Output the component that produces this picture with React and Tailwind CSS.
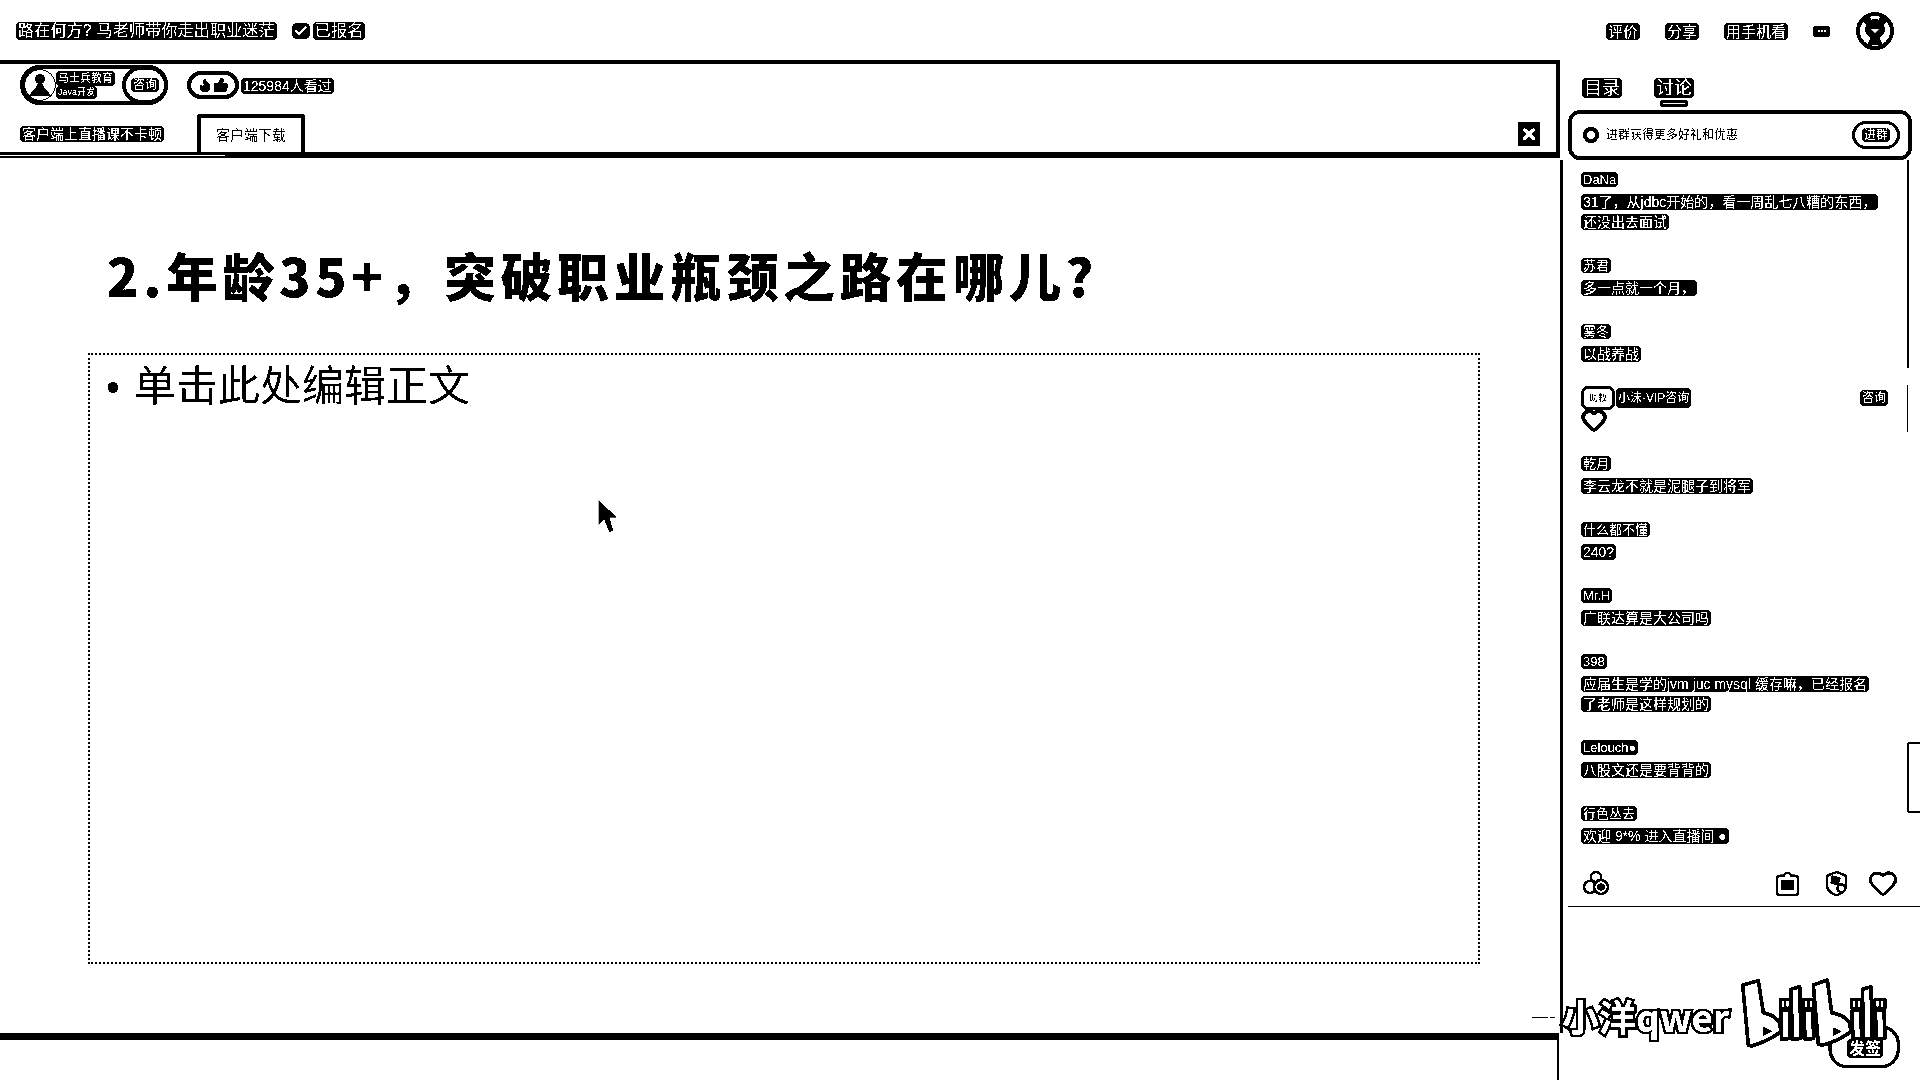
import React from "react";
import { Check, Heart, Flame, ThumbsUp, X } from "lucide-react";

const Hl = ({ children, className = "" }) => (
  <span className={"bg-black text-white rounded-[4px] px-[2px] py-[1px] box-decoration-clone " + className}>{children}</span>
);

const messages = [
  { name: "DaNa", lines: ["31了，从jdbc开始的，看一周乱七八糟的东西，", "还没出去面试"] },
  { name: "苏君", lines: ["多一点就一个月，"] },
  { name: "雾冬", lines: ["以战养战"] },
  { vip: true },
  { name: "乾月", lines: ["李云龙不就是泥腿子到将军"] },
  { name: "什么都不懂", lines: ["240?"] },
  { name: "Mr.H", lines: ["广联达算是大公司吗"] },
  { name: "398", lines: ["应届生是学的jvm juc mysql 缓存嘛，已经报名", "了老师是这样规划的"] },
  { name: "Lelouch●", lines: ["八股文还是要背背的"] },
  { name: "行色丛去", lines: ["欢迎 9*% 进入直播间 ●"], tight: true },
];

function Message({ m }) {
  if (m.vip) {
    return (
      <div className="mb-[23px] pr-[22px]">
        <div className="h-[20px] flex items-center text-[12px] pt-[2px]">
          <span className="bg-white border-[3px] border-black rounded-[7px] w-[34px] h-[24px] flex items-center justify-center text-[9px] text-black leading-none">助教</span>
          <Hl className="ml-[1px]">小沫-VIP咨询</Hl>
          <span className="ml-auto"><Hl>咨询</Hl></span>
        </div>
        <div className="h-[20px] mt-[3px] flex items-center">
          <Heart className="w-[26px] h-[26px] text-black fill-white" strokeWidth={3.5} />
        </div>
      </div>
    );
  }
  return (
    <div className={m.tight ? "" : "mb-[23px]"}>
      <div className="h-[20px] flex items-center text-[13px] leading-none"><Hl>{m.name}</Hl></div>
      <div className="mt-[3px]">
        {m.lines.map((l) => (
          <div key={l} className="h-[20px] flex items-center text-[14px] leading-none whitespace-nowrap"><Hl>{l}</Hl></div>
        ))}
      </div>
    </div>
  );
}

function IGlyph({ x, tall, w = 26 }) {
  if (tall) {
    return <path d={`M${x} 58 L${x + w} 50 L${x + w + 4} 205 L${x + 4} 208 Z`} fill="white" stroke="black" strokeWidth="11" strokeLinejoin="round" />;
  }
  return (
    <g>
      <rect x={x - 6} y="84" width={w + 14} height="34" rx="4" fill="black" />
      <rect x={x + 3} y="92" width="7" height="18" fill="white" />
      <rect x={x + 17} y="92" width="7" height="18" fill="white" />
      <path d={`M${x} 122 L${x + w} 120 L${x + w + 3} 205 L${x + 3} 208 Z`} fill="white" stroke="black" strokeWidth="11" strokeLinejoin="round" />
    </g>
  );
}

function Logo() {
  return (
    <svg viewBox="0 0 540 315" className="absolute left-[1730px] top-[970px] w-[180px] h-[105px]">
      <rect x="300" y="170" width="205" height="120" rx="52" fill="white" stroke="black" strokeWidth="10" />
      <IGlyph x={152} />
      <IGlyph x={183} tall />
      <IGlyph x={222} />
      <IGlyph x={366} />
      <IGlyph x={397} tall />
      <IGlyph x={436} />
      <path d="M38 45 L85 32 L100 128 Q135 135 150 160 L152 186 Q110 215 65 228 L55 225 Z" fill="white" stroke="black" strokeWidth="11" strokeLinejoin="round" />
      <path d="M250 45 L292 30 L305 128 Q345 135 360 160 L362 186 Q320 215 275 226 L265 222 Z" fill="white" stroke="black" strokeWidth="11" strokeLinejoin="round" />
      <path d="M100 170 L128 184 L100 198 Z" fill="black" />
      <path d="M310 172 L336 185 L310 198 Z" fill="black" />
    </svg>
  );
}

export default function App() {
  return (
    <div className="relative w-[1920px] h-[1080px] overflow-hidden bg-white text-black contrast-[100] font-['Liberation_Sans','Noto_Sans_CJK_SC',sans-serif]">
      {/* top bar */}
      <div className="h-[60px] flex items-center justify-between pl-[16px] pr-[25px] pt-[2px]">
        <div className="flex items-center text-[16px] leading-none tracking-[0.2px]">
          <Hl>路在何方? 马老师带你走出职业迷茫</Hl>
          <span className="ml-[15px] bg-black rounded-[5px] w-[18px] h-[16px] flex items-center justify-center">
            <Check className="w-[14px] h-[14px] text-white" strokeWidth={4} />
          </span>
          <Hl className="ml-[3px]">已报名</Hl>
        </div>
        <div className="flex items-center text-[15px] leading-none">
          <Hl>评价</Hl>
          <Hl className="ml-[25px]">分享</Hl>
          <Hl className="ml-[25px]">用手机看</Hl>
          <span className="ml-[25px] w-[17px] h-[11px] bg-black rounded-[3px] flex items-center justify-center gap-[1px]">
            <i className="w-[2px] h-[2px] bg-white" /><i className="w-[2px] h-[2px] bg-white" /><i className="w-[2px] h-[2px] bg-white" />
          </span>
          <svg viewBox="0 0 40 40" className="ml-[25px] w-[40px] h-[40px]">
            <circle cx="20" cy="20" r="17" fill="white" stroke="black" strokeWidth="4" />
            <circle cx="20" cy="18" r="10" fill="black" />
            <circle cx="12" cy="9" r="4" fill="black" />
            <circle cx="28" cy="9" r="4" fill="black" />
            <path d="M12 34 L16 26 L24 26 L28 34 Z" fill="black" />
            <path d="M16 18 h8 l-4 4 Z" fill="white" />
          </svg>
        </div>
      </div>

      <div className="flex h-[1020px]">
        {/* main column */}
        <div className="w-[1560px] flex flex-col">
          <div className="h-[98px] border-t-[4px] border-b-[6px] border-r-[4px] border-black flex flex-col relative">
            <div className="h-[40px] flex items-start pl-[20px] pt-[1px]">
              <div className="flex items-center h-[40px] w-[148px] bg-white border-[4px] border-black rounded-full">
                <svg viewBox="0 0 32 32" className="w-[32px] h-[32px] shrink-0">
                  <circle cx="16" cy="16" r="15.5" fill="white" stroke="black" strokeWidth="1" />
                  <circle cx="16" cy="10" r="5" fill="black" />
                  <path d="M5 27 C8 21 12 21 13 15 H19 C20 21 24 21 27 27 Z" fill="black" />
                </svg>
                <div className="flex flex-col items-start text-[11px] leading-[15px] w-[64px] shrink-0 whitespace-nowrap">
                  <Hl className="rounded-[2px] leading-[13px]">马士兵教育</Hl>
                  <Hl className="text-[9px] rounded-[2px] leading-[11px]">Java开发</Hl>
                </div>
                <span className="ml-auto w-[46px] h-[38px] -mr-[4px] rounded-full bg-white border-[4px] border-black flex items-center justify-center text-[12px] leading-none">
                  <Hl>咨询</Hl>
                </span>
              </div>
              <div className="ml-[19px] mt-[6px] w-[52px] h-[28px] bg-black rounded-full flex items-center justify-center gap-[1px]">
                <span className="w-[44px] h-[20px] bg-white rounded-full flex items-center justify-center">
                  <Flame className="w-[16px] h-[16px] text-black fill-black" />
                  <ThumbsUp className="w-[16px] h-[16px] text-black fill-black" />
                </span>
              </div>
              <Hl className="ml-[2px] mt-[13px] text-[14px] leading-none">125984人看过</Hl>
            </div>
            <div className="flex-1 flex items-end pl-[20px] pr-[16px]">
              <div className="h-[40px] flex items-center text-[14px] leading-none pt-[4px]">
                <Hl>客户端上直播课不卡顿</Hl>
              </div>
              <div className="ml-[33px] w-[108px] h-[38px] border-[4px] border-b-0 border-black rounded-t-[3px] flex items-center justify-center text-[14px] leading-none">
                客户端下载
              </div>
              <span className="ml-auto mb-[6px] w-[22px] h-[24px] bg-black flex items-center justify-center">
                <X className="w-[18px] h-[18px] text-white" strokeWidth={4} />
              </span>
            </div>
            <div className="absolute left-0 top-[91px] w-[225px] h-px bg-white" />
          </div>

          <div className="h-[875px] pt-[74px] px-[88px]">
            <div className="h-[85px] flex items-center pl-[19px] text-[52px] font-black tracking-[4.5px] leading-none whitespace-nowrap font-['Noto_Sans_CJK_SC',sans-serif]">
              2.年龄35+，突破职业瓶颈之路在哪儿?
            </div>
            <div className="mt-[36px] w-[1392px] h-[611px] border-[2px] border-dotted border-black pl-[16px] pt-[3px] flex items-start">
              <span className="text-[42px] leading-[50px] whitespace-nowrap font-['Noto_Sans_CJK_SC',sans-serif]">
                <span className="text-[40px] leading-none mr-[14px] font-['Liberation_Sans']">•</span>单击此处编辑正文
              </span>
            </div>
          </div>

          <div className="flex-1 border-t-[7px] border-r-[2px] border-black mr-px" />
        </div>

        {/* sidebar */}
        <div className="w-[360px] flex flex-col">
          <div className="h-[100px]">
            <div className="h-[50px] flex items-start pt-[18px] pl-[22px] text-[18px] leading-none">
              <Hl>目录</Hl>
              <div className="ml-[32px] flex flex-col items-center">
                <Hl>讨论</Hl>
                <span className="mt-[2px] w-[28px] h-[7px] bg-black rounded-[2px] flex items-center justify-center">
                  <i className="w-[22px] h-[1px] bg-white" />
                </span>
              </div>
            </div>
            <div className="ml-[8px] w-[344px] h-[50px] border-[4px] border-black rounded-[12px] flex items-center pl-[11px] pr-[8px] text-[12px] leading-none">
              <span className="w-[16px] h-[16px] rounded-full bg-black flex items-center justify-center">
                <i className="w-[8px] h-[8px] bg-white rounded-full" />
              </span>
              <span className="ml-[7px]">进群获得更多好礼和优惠</span>
              <span className="ml-auto w-[48px] h-[28px] border-[3px] border-black rounded-full flex items-center justify-center">
                <Hl>进群</Hl>
              </span>
            </div>
          </div>

          <div className="relative h-[873px] border-l-[3px] border-black flex flex-col">
            <div className="h-[690px] overflow-hidden pt-[9px] pl-[18px] pr-[10px]">
              {messages.map((m, i) => <Message key={i} m={m} />)}
            </div>
            <div className="h-[57px] ml-[5px] border-b-[1px] border-black flex items-center pl-[14px] pr-[22px] pt-[10px] text-black">
              <svg viewBox="0 0 28 28" className="w-[28px] h-[28px]" fill="white" stroke="black" strokeWidth="2.5">
                <circle cx="14" cy="8" r="5" />
                <circle cx="8" cy="18" r="6" />
                <circle cx="19" cy="18" r="7" />
                <circle cx="19" cy="18" r="2.5" fill="black" />
              </svg>
              <svg viewBox="0 0 28 28" className="ml-auto w-[27px] h-[27px]" fill="white" stroke="black" strokeWidth="2.5">
                <path d="M3 9 Q3 6 6 6 H10 Q14 0 18 6 H22 Q25 6 25 9 V23 Q25 26 22 26 H6 Q3 26 3 23 Z" />
                <rect x="8" y="12" width="12" height="8" fill="black" />
              </svg>
              <svg viewBox="0 0 28 28" className="ml-[22px] w-[27px] h-[27px]" fill="white" stroke="black" strokeWidth="2.5">
                <path d="M14 2 L24 6 V15 C24 21 19 25 14 26 C9 25 4 21 4 15 V6 Z" />
                <path d="M10 7 L17 9 L15 15 L9 13 Z" fill="black" />
                <circle cx="19" cy="19" r="4" />
              </svg>
              <Heart className="ml-[18px] w-[30px] h-[30px] text-black fill-white" strokeWidth={2.4} />
            </div>
            <div className="absolute left-[344px] top-0 w-[2px] h-[208px] bg-black" />
            <div className="absolute left-[344px] top-[225px] w-px h-[47px] bg-black" />
            <div className="absolute left-[344px] top-[582px] w-[13px] h-[71px] border-[2px] border-r-0 border-black rounded-l-[3px]" />
          </div>

          <div className="flex-1" />
        </div>
      </div>

      {/* cursor */}
      <svg viewBox="0 0 24 36" className="absolute left-[597px] top-[498px] w-[24px] h-[36px]">
        <path d="M1 1 L21 20 L13 20 L17 33 L12 35 L7 22 L1 28 Z" fill="black" stroke="white" strokeWidth="1" />
      </svg>

      {/* watermark */}
      <div className="absolute left-[1532px] top-[1017px] w-[16px] h-px bg-black" />
      <div className="absolute left-[1550px] top-[1017px] w-[5px] h-px bg-black" />
      <div className="absolute left-[1562px] top-[991px] text-[37px] leading-[50px] font-bold whitespace-nowrap text-white font-['Noto_Sans_CJK_SC',sans-serif] [-webkit-text-stroke:5px_black] [paint-order:stroke_fill]">
        小洋qwer
      </div>
      <Logo />
      <div className="absolute left-[1847px] top-[1041px] text-[16px] leading-none font-bold"><Hl>发签</Hl></div>
    </div>
  );
}
